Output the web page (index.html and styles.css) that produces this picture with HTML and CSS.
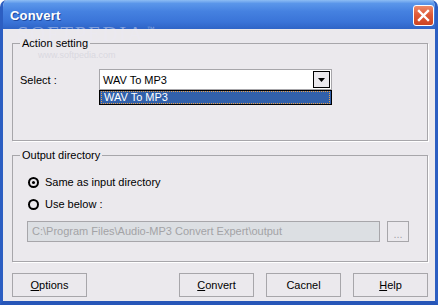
FILE: index.html
```html
<!DOCTYPE html>
<html lang="en">
<head>
    <meta charset="UTF-8">
    <title>Convert</title>
    <link rel="stylesheet" href="styles.css">
</head>
<body>
    <div class="window">
        <div class="title-bar">
            <span class="title-text">Convert</span>
            <button class="close-btn" aria-label="Close">
                <svg width="13" height="13" viewBox="0 0 13 13">
                    <path d="M2 2 L11 11 M11 2 L2 11" stroke="#fff" stroke-width="2.4" stroke-linecap="square"/>
                </svg>
            </button>
        </div>

        <!-- watermark from the original screenshot -->
        <div class="watermark">SOFTPEDIA<span class="tm">™</span></div>
        <div class="watermark-url">www.softpedia.com</div>

        <div class="content">
            <fieldset class="group action-group">
                <legend>Action setting</legend>
                <div class="select-row">
                    <label class="select-label">Select :</label>
                    <div class="combo">
                        <span class="combo-value">WAV To MP3</span>
                        <span class="combo-btn">
                            <svg width="7" height="4" viewBox="0 0 7 4"><path d="M0 0 H7 L3.5 4 Z" fill="#000"/></svg>
                        </span>
                        <div class="combo-list">
                            <div class="combo-item">WAV To MP3</div>
                        </div>
                    </div>
                </div>
            </fieldset>

            <fieldset class="group output-group">
                <legend>Output directory</legend>
                <div class="output-body">
                    <div class="radio-row">
                        <span class="radio checked"></span>Same as input directory
                    </div>
                    <div class="radio-row">
                        <span class="radio"></span>Use below :
                    </div>
                    <div class="path-row">
                        <div class="path-input">C:\Program Files\Audio-MP3 Convert Expert\output</div>
                        <button class="browse-btn">...</button>
                    </div>
                </div>
            </fieldset>

            <div class="button-row">
                <button class="dlg-btn"><u>O</u>ptions</button>
                <button class="dlg-btn push-right"><u>C</u>onvert</button>
                <button class="dlg-btn">Cacnel</button>
                <button class="dlg-btn"><u>H</u>elp</button>
            </div>
        </div>
    </div>
</body>
</html>
```

FILE: styles.css
```css
body {
    margin: 0;
    font-family: "Liberation Sans", Arial, sans-serif;
    font-size: 11px;
    color: #000;
    background: #ffffff;
}

.window {
    position: relative;
    width: 438px;
    height: 305px;
    box-sizing: border-box;
    background: #ebe9ed;
    border-left: 3px solid #2c5ec2;
    border-right: 3px solid #2c5ec2;
    border-bottom: 4px solid #2756b8;
    border-radius: 7px 7px 0 0;
    overflow: hidden;
}

.title-bar {
    height: 29px;
    margin: 0 -3px;
    padding: 0 4px 0 10px;
    display: flex;
    align-items: center;
    justify-content: space-between;
    background: linear-gradient(180deg, #8dbdf4 0%, #5a96ea 12%, #4581e0 40%, #3a74d8 75%, #2f64c6 100%);
    border-radius: 7px 7px 0 0;
}

.title-text {
    color: #fff;
    font-weight: bold;
    font-size: 13px;
    line-height: 13px;
    letter-spacing: 0.2px;
    text-shadow: 1px 1px 0 #1f4aa0;
    margin-top: 2px;
}

.close-btn {
    width: 21px;
    height: 21px;
    padding: 0;
    border: 1px solid #fff;
    border-radius: 3px;
    background: linear-gradient(180deg, #ee8a69 0%, #df5b39 45%, #cc4422 100%);
    display: flex;
    align-items: center;
    justify-content: center;
    margin-top: 2px;
}

.watermark {
    position: absolute;
    left: 14px;
    top: 22px;
    font-family: "Liberation Serif", serif;
    font-size: 21px;
    line-height: 15px;
    letter-spacing: 1.6px;
    color: rgba(235, 235, 245, 0.45);
    pointer-events: none;
}

.watermark .tm {
    font-family: "Liberation Sans", sans-serif;
    font-size: 8px;
    vertical-align: 9px;
    margin-left: 2px;
}

.watermark-url {
    position: absolute;
    left: 35px;
    top: 51px;
    font-size: 9px;
    line-height: 9px;
    color: rgba(200, 200, 210, 0.5);
    pointer-events: none;
}

.content {
    padding: 8px 7px 0 9px;
}

.group {
    margin: 0;
    padding: 0 7px;
    border: 1px solid #a7a6aa;
    box-shadow: 1px 1px 0 #fff;
    min-width: 0;
}

.group legend {
    padding: 0 2px;
    line-height: 13px;
}

.action-group {
    padding-top: 19px;
    padding-bottom: 50px;
}

.select-row {
    display: flex;
    align-items: center;
    height: 21px;
}

.select-label {
    width: 79px;
}

.combo {
    position: relative;
    width: 233px;
    height: 21px;
    box-sizing: border-box;
    background: #fff;
    border: 1px solid #a7a6aa;
    display: flex;
    align-items: center;
    justify-content: space-between;
    padding: 0 1px 0 3px;
}

.combo-value {
    font-size: 11px;
}

.combo-btn {
    width: 17px;
    height: 17px;
    box-sizing: border-box;
    border: 1px solid #000;
    background: #ebe9ed;
    display: flex;
    align-items: center;
    justify-content: center;
}

.combo-list {
    position: absolute;
    left: -1px;
    right: -1px;
    top: 20px;
    height: 15px;
    box-sizing: border-box;
    border: 1px solid #000;
    background: #3160aa;
    padding: 0 1px;
}

.combo-item {
    height: 13px;
    box-sizing: border-box;
    border: 1px dotted #e8a04a;
    color: #fff;
    font-size: 11px;
    line-height: 11px;
    padding-left: 2px;
}

.output-group {
    margin-top: 8px;
    padding-top: 12px;
    padding-bottom: 19px;
}

.output-body {
    padding-left: 7px;
}

.radio-row {
    display: flex;
    align-items: center;
    height: 16px;
    margin-bottom: 6px;
}

.radio {
    width: 11px;
    height: 11px;
    box-sizing: border-box;
    border: 2px solid #000;
    border-radius: 50%;
    margin: 0 6px 0 1px;
    display: flex;
    align-items: center;
    justify-content: center;
}

.radio.checked::after {
    content: "";
    width: 3px;
    height: 3px;
    border-radius: 50%;
    background: #000;
}

.path-row {
    display: flex;
    gap: 7px;
    margin-top: 9px;
}

.path-input {
    width: 353px;
    height: 21px;
    box-sizing: border-box;
    background: #dcdfe3;
    border: 1px solid #a7a6aa;
    color: #a3a3a6;
    line-height: 19px;
    padding-left: 4px;
    white-space: nowrap;
    overflow: hidden;
}

.browse-btn {
    width: 22px;
    height: 21px;
    padding: 0;
    border: 1px solid #a7a6aa;
    background: #ebe9ed;
    color: #a3a3a6;
    font-family: inherit;
    font-size: 11px;
    line-height: 24px;
}

.button-row {
    display: flex;
    gap: 12px;
    margin-top: 11px;
}

.dlg-btn {
    width: 75px;
    height: 24px;
    padding: 0;
    border: 1px solid #a7a6aa;
    background: #ebe9ed;
    font-family: inherit;
    font-size: 11px;
    color: #000;
}

.push-right {
    margin-left: auto;
}
```
